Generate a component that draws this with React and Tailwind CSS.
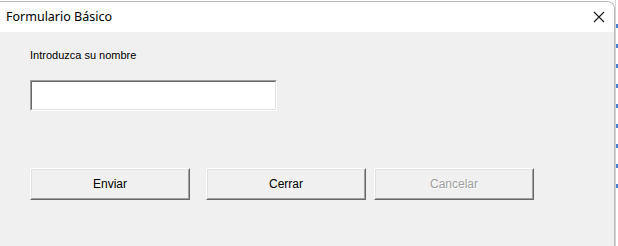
import React from 'react';

const ui = { fontFamily: '"Liberation Sans", Arial, sans-serif' };

function ClassicButton({ label, disabled }) {
  return (
    <div className="w-[160px] h-[32px] border border-t-white border-l-white border-b-[#696969] border-r-[#696969]">
      <div className="w-full h-full border border-t-[#e3e3e3] border-l-[#e3e3e3] border-b-[#a0a0a0] border-r-[#a0a0a0] bg-[#f0f0f0] flex items-center justify-center">
        <span
          className={`text-[12px] ${disabled ? 'text-[#a0a0a0] [text-shadow:1px_1px_0_#ffffff]' : 'text-black'}`}
          style={ui}
        >
          {label}
        </span>
      </div>
    </div>
  );
}

export default function App() {
  return (
    <div className="w-[618px] h-[246px] bg-white flex overflow-hidden" style={ui}>
      {/* Dialog window */}
      <div className="w-[615px] h-[246px] mt-[1px] flex flex-col border-r border-t border-[#b9b9b9] rounded-tr-[8px] overflow-hidden">
        {/* Title bar */}
        <div className="h-[30px] bg-white flex items-center justify-between pl-[6px] pr-[6px] shrink-0">
          <span className="text-[12.5px] text-black" style={{ fontFamily: '"Noto Sans", "Open Sans", sans-serif' }}>
            Formulario Básico
          </span>
          <svg width="12" height="12" viewBox="0 0 12 12" className="mr-[3px]">
            <path d="M1 1 L11 11 M11 1 L1 11" stroke="#1a1a1a" strokeWidth="1.1" />
          </svg>
        </div>

        {/* Body */}
        <div className="flex-1 bg-[#f0f0f0] pl-[30px] pt-[16px] flex flex-col">
          <div className="h-[14px] text-[11px] leading-[14px] text-black">Introduzca su nombre</div>

          <div className="mt-[18px] w-[247px] h-[31px] border border-t-[#a0a0a0] border-l-[#a0a0a0] border-b-white border-r-white">
            <div className="w-full h-full border border-t-[#696969] border-l-[#696969] border-b-[#e3e3e3] border-r-[#e3e3e3] bg-white" />
          </div>

          <div className="mt-[57px] flex items-start">
            <ClassicButton label="Enviar" />
            <div className="ml-[16px]">
              <ClassicButton label="Cerrar" />
            </div>
            <div className="ml-[8px]">
              <ClassicButton label="Cancelar" disabled />
            </div>
          </div>
        </div>
      </div>

      {/* Spreadsheet peeking behind */}
      <div className="w-[3px] h-[246px] flex flex-col pt-[8px] border-l border-[#d4d4d4]">
        {[0, 1, 2, 3, 4, 5, 6, 7, 8].map((i) => (
          <div key={i} className="h-[20px] flex flex-col justify-end">
            <div className="h-[4px] w-[2px] bg-[#4a7fd0]" />
          </div>
        ))}
      </div>
    </div>
  );
}
